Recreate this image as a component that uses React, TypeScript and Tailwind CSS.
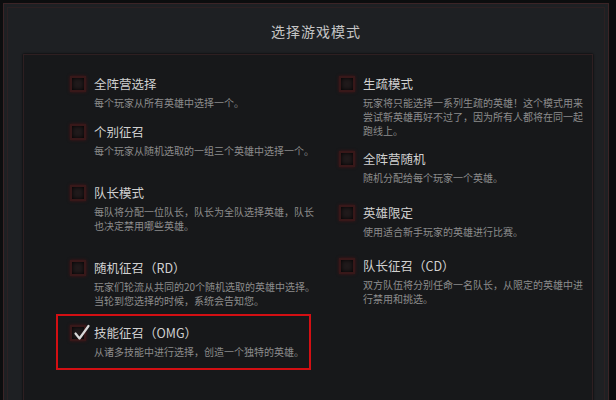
type Mode = {
  title: string;
  lines: string[];
  mt: string;
};

const leftModes: Mode[] = [
  { title: "全阵营选择", lines: ["每个玩家从所有英雄中选择一个。"], mt: "mt-0" },
  { title: "个别征召", lines: ["每个玩家从随机选取的一组三个英雄中选择一个。"], mt: "mt-[13px]" },
  {
    title: "队长模式",
    lines: ["每队将分配一位队长，队长为全队选择英雄，队长", "也决定禁用哪些英雄。"],
    mt: "mt-[26px]",
  },
  {
    title: "随机征召（RD）",
    lines: ["玩家们轮流从共同的20个随机选取的英雄中选择。", "当轮到您选择的时候，系统会告知您。"],
    mt: "mt-[26px]",
  },
];

const rightModes: Mode[] = [
  {
    title: "生疏模式",
    lines: [
      "玩家将只能选择一系列生疏的英雄！这个模式用来",
      "尝试新英雄再好不过了，因为所有人都将在同一起",
      "跑线上。",
    ],
    mt: "mt-0",
  },
  { title: "全阵营随机", lines: ["随机分配给每个玩家一个英雄。"], mt: "mt-[12px]" },
  { title: "英雄限定", lines: ["使用适合新手玩家的英雄进行比赛。"], mt: "mt-[19px]" },
  {
    title: "队长征召（CD）",
    lines: ["双方队伍将分别任命一名队长，从限定的英雄中进", "行禁用和挑选。"],
    mt: "mt-[18px]",
  },
];

function Checkbox({ checked }: { checked?: boolean }) {
  return (
    <div className="relative mt-[1px] size-[16px] shrink-0 border-2 border-[#381819] bg-[#201a1b] shadow-[inset_0_0_4px_#000,0_0_3px_#451315]">
      {checked && (
        <svg
          className="absolute left-[1px] top-[-3px]"
          width="18"
          height="18"
          viewBox="0 0 18 18"
          fill="none"
        >
          <path d="M2.5 9.5 L6.5 14.5 L15.5 2" stroke="#d8d8d8" strokeWidth="2.2" strokeLinecap="round" strokeLinejoin="round" />
        </svg>
      )}
    </div>
  );
}

function ModeItem({ mode, checked }: { mode: Mode; checked?: boolean }) {
  return (
    <div className={`flex gap-[8px] ${mode.mt}`}>
      <Checkbox checked={checked} />
      <div>
        <div className="text-[12.5px] leading-[18px] text-[#d0d0d0] whitespace-nowrap">{mode.title}</div>
        <div className="mt-[3px] text-[10px] leading-[14px] text-[#8c8c8c]">
          {mode.lines.map((line) => (
            <div key={line} className="whitespace-nowrap">
              {line}
            </div>
          ))}
        </div>
      </div>
    </div>
  );
}

export default function App() {
  return (
    <div
      className="w-[616px] h-[400px] overflow-hidden bg-[#0c0d0e] pt-[3px] pl-[3px] pr-[7px]"
      style={{ fontFamily: '"Noto Sans CJK SC", "Noto Sans", sans-serif' }}
    >
      <div className="flex h-[420px] flex-col border border-[#3b2426] bg-[#1e2023] shadow-[inset_0_0_0_3px_#1e2023,inset_0_0_0_4px_#2c2022]">
        {/* title */}
        <div className="flex h-[50px] shrink-0 items-center justify-center pt-[4px] pl-[20px]">
          <span className="text-[14px] tracking-[1px] text-[#c4c4c4]">选择游戏模式</span>
        </div>

        {/* options panel */}
        <div className="ml-[19px] mr-[15px] flex-1 border border-[#2e1f21] bg-[#17181a] shadow-[0_0_2px_#000]">
          <div className="flex pt-[20px] pl-[46px]">
            <div className="flex w-[269px] flex-col">
              {leftModes.map((m) => (
                <ModeItem key={m.title} mode={m} />
              ))}
              <div className="mt-[6px] -ml-[14px] w-[255px] border-2 border-[#d30f13] pl-[12px] pt-[8px] pb-[9px]">
                <ModeItem
                  mode={{ title: "技能征召（OMG）", lines: ["从诸多技能中进行选择，创造一个独特的英雄。"], mt: "mt-0" }}
                  checked
                />
              </div>
            </div>
            <div className="flex flex-col">
              {rightModes.map((m) => (
                <ModeItem key={m.title} mode={m} />
              ))}
            </div>
          </div>
        </div>
      </div>
    </div>
  );
}
